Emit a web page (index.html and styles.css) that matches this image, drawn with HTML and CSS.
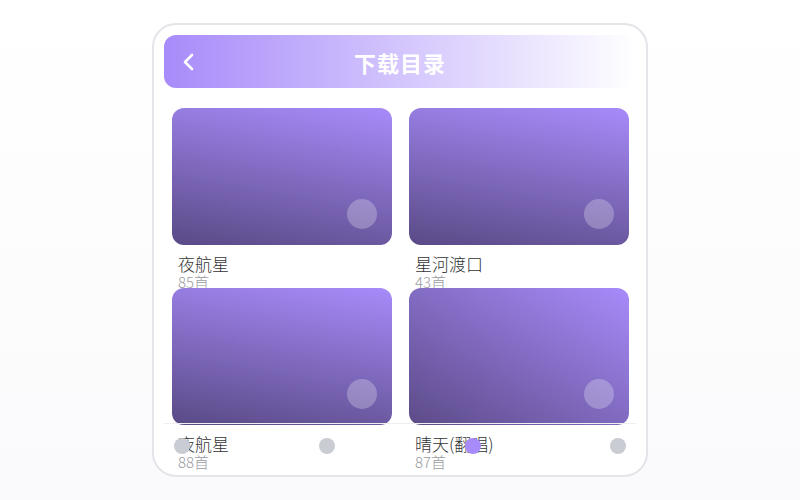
FILE: index.html
```html
<!DOCTYPE html>
<html>
<head>
    <meta charset="utf-8" />
    <title>下载目录</title>
    <link rel="stylesheet" href="styles.css">
</head>
<body>
    <div class="phone">
        <div class="header">
            <span class="back">
                <svg width="20" height="20" viewBox="0 0 20 20"><path d="M13 3 L6 10 L13 17" fill="none" stroke="#fff" stroke-width="2.6" stroke-linecap="round" stroke-linejoin="round"/></svg>
            </span>
            <h1>下载目录</h1>
        </div>

        <div class="grid">
            <div class="item">
                <div class="cover cover-a"><span class="play"></span></div>
                <div class="name">夜航星</div>
                <div class="count">85首</div>
            </div>
            <div class="item">
                <div class="cover cover-a"><span class="play"></span></div>
                <div class="name">星河渡口</div>
                <div class="count">43首</div>
            </div>
            <div class="item">
                <div class="cover cover-a"><span class="play"></span></div>
                <div class="name">夜航星</div>
                <div class="count">88首</div>
            </div>
            <div class="item">
                <div class="cover cover-b"><span class="play"></span></div>
                <div class="name">晴天(翻唱)</div>
                <div class="count">87首</div>
            </div>
        </div>

        <div class="tabbar">
            <span class="dot"></span>
            <span class="dot"></span>
            <span class="dot active"></span>
            <span class="dot"></span>
        </div>
    </div>
</body>
</html>
```

FILE: styles.css
```css
body {
    font-family: "Noto Sans CJK SC", "Noto Sans", sans-serif;
    margin: 0;
    padding: 0;
    background: linear-gradient(180deg, #ffffff, #fafafc);
    display: flex;
    justify-content: center;
    align-items: center;
    min-height: 100vh;
}

.phone {
    position: relative;
    width: 472px;
    height: 430px;
    padding: 10px 10px 10px 10px;
    border: 2px solid #e4e4e9;
    border-radius: 24px;
    background-color: white;
    overflow: hidden;
}

.header {
    position: relative;
    height: 53px;
    border-radius: 12px;
    background: linear-gradient(90deg, #a78bfa, rgba(167, 139, 250, 0));
    display: flex;
    align-items: center;
    justify-content: center;
}

.back {
    position: absolute;
    left: 15px;
    top: 17px;
    width: 20px;
    height: 20px;
}

h1 {
    margin: 0;
    color: white;
    font-size: 22px;
    font-weight: bold;
    letter-spacing: 1px;
}

.grid {
    display: grid;
    grid-template-columns: 220px 220px;
    column-gap: 17px;
    padding: 20px 8px 0 8px;
}

.item {
    height: 180px;
}

.cover {
    position: relative;
    height: 137px;
    border-radius: 12px;
}

.cover-a {
    background: linear-gradient(190deg, #a78bfa, #5a4a86);
}

.cover-b {
    background: linear-gradient(210deg, #a78bfa, #5c4b88);
}

.play {
    position: absolute;
    right: 15px;
    bottom: 16px;
    width: 30px;
    height: 30px;
    border-radius: 50%;
    background-color: rgba(255, 255, 255, 0.25);
}

.name {
    margin: 9px 0 0 6px;
    font-size: 17px;
    line-height: 20px;
    font-weight: 300;
    color: #333;
}

.count {
    margin-left: 6px;
    font-size: 15px;
    line-height: 15px;
    font-weight: 300;
    color: #9a9aa2;
}

.tabbar {
    position: absolute;
    left: 10px;
    right: 10px;
    bottom: 7px;
    height: 44px;
    padding: 0 10px;
    border-top: 1px solid #efeff2;
    display: flex;
    justify-content: space-between;
    align-items: center;
}

.dot {
    width: 16px;
    height: 16px;
    border-radius: 50%;
    background-color: #c9ccd3;
}

.dot.active {
    background-color: #a78bfa;
}
```
